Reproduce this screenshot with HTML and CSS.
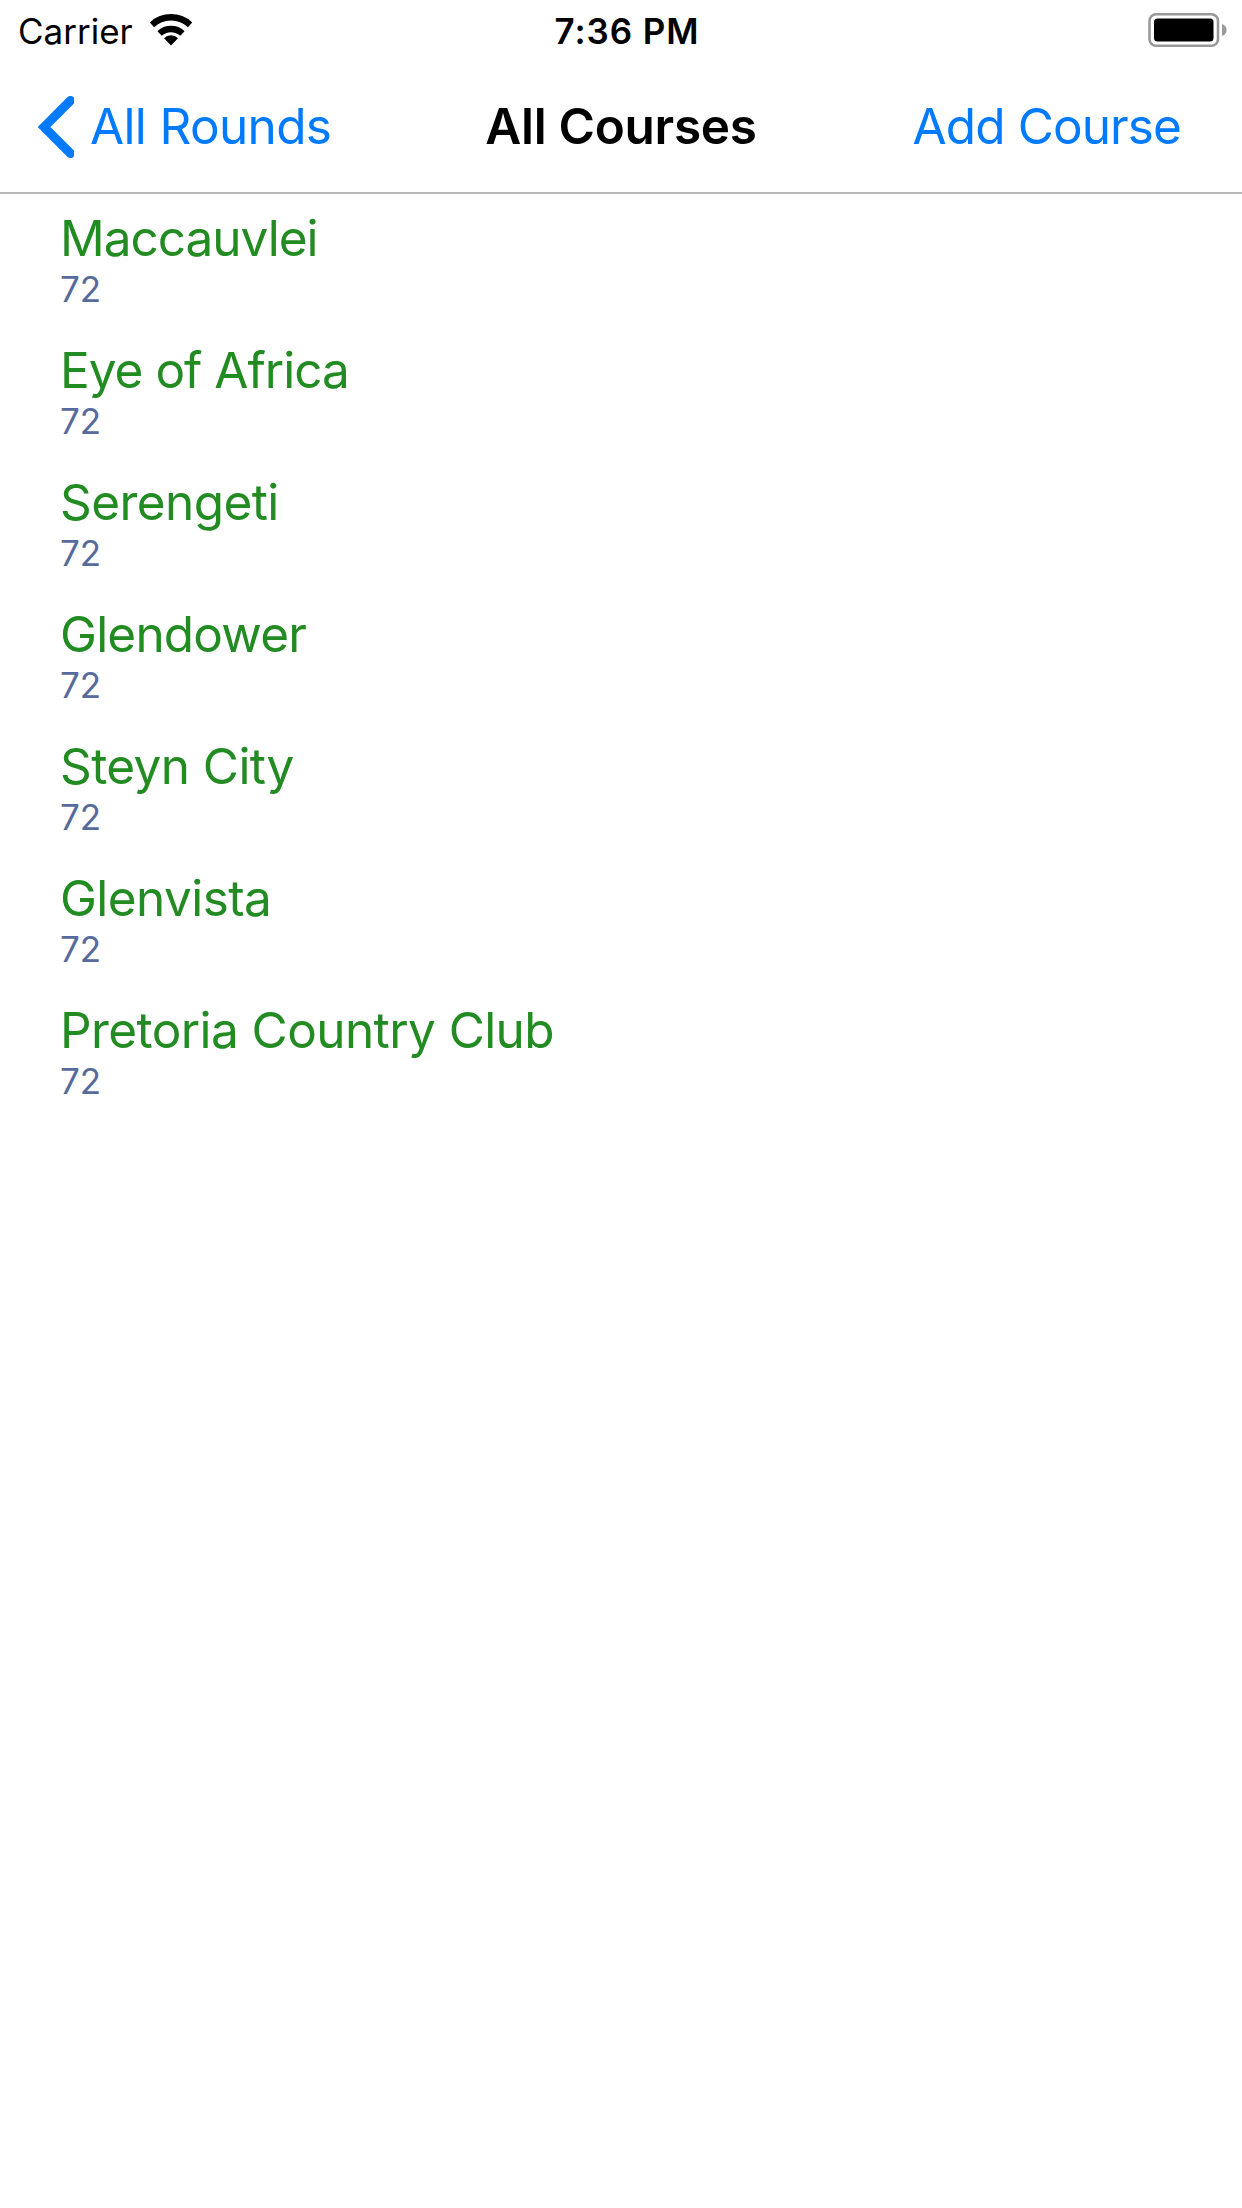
FILE: index.html
```html
<!DOCTYPE html>
<html lang="en">
<head>
<meta charset="utf-8">
<title>All Courses</title>
<link rel="stylesheet" href="styles.css">
</head>
<body>
<header class="status">
  <div class="carrier"><span class="carrier-name">Carrier</span>
    <svg class="wifi" width="42" height="32" viewBox="0 0 42 32"><path class="wave" d="M1.900 10.800A28 28 0 0 1 40.100 10.800M9.600 19.500A16.500 16.500 0 0 1 32.400 19.500"/><path d="M14 24.200A10 10 0 0 1 28 24.200L21 31.500Z"/></svg>
  </div>
  <time class="time">7:36 PM</time>
  <svg class="battery" width="80" height="36" viewBox="0 0 80 36"><rect class="shell" x="2.500" y="2.250" width="68.500" height="31.500" rx="6.500"/><rect x="7" y="6.500" width="59.500" height="23" rx="3.500"/><path class="tip" d="M75 12Q79.500 13.500 79.500 18T75 24Z"/></svg>
</header>
<nav class="nav">
  <a class="back"><svg class="chevron" width="36" height="62" viewBox="0 0 36 62"><path d="M32.500 4.500L6 31L32.500 57.500"/></svg><span class="back-label">All Rounds</span></a>
  <h1 class="title">All Courses</h1>
  <a class="add">Add Course</a>
</nav>
<main class="courses">
  <section class="course"><h2 class="tight">Maccauvlei</h2><p>72</p></section>
  <section class="course"><h2 class="tight">Eye of Africa</h2><p>72</p></section>
  <section class="course"><h2>Serengeti</h2><p>72</p></section>
  <section class="course"><h2 class="snug">Glendower</h2><p>72</p></section>
  <section class="course"><h2>Steyn City</h2><p>72</p></section>
  <section class="course"><h2>Glenvista</h2><p>72</p></section>
  <section class="course"><h2>Pretoria Country Club</h2><p>72</p></section>
</main>
</body>
</html>
```
FILE: styles.css
```css
* { box-sizing: border-box; margin: 0; padding: 0; }
body { min-height: 2208px; background: #fff; font-family: Inter, sans-serif; color: #000; }
.status { display: grid; grid-template-columns: 1fr auto 1fr; align-items: center; height: 60px; padding: 0 15px 0 18px; }
.carrier { display: flex; align-items: center; gap: 17px; font-size: 35px; }
.carrier-name { padding-top: 2px; }
.wave { fill: none; stroke: #000; stroke-width: 6.4; }
.time { padding: 2px 0 0 9px; font-size: 35px; font-weight: 560; letter-spacing: 0.9px; }
.battery { justify-self: end; }
.shell { fill: none; stroke: #999; stroke-width: 2.5; }
.tip { fill: #999; }
.nav { display: grid; grid-template-columns: 1fr auto 1fr; align-items: center; height: 134px; border-bottom: 2px solid #b8b8b8; padding: 0 38px; font-size: 49.5px; color: #007aff; }
.back { display: flex; align-items: center; gap: 16px; letter-spacing: -0.65px; }
.chevron { margin-top: 2px; }
.chevron path { fill: none; stroke: #007aff; stroke-width: 9; stroke-linecap: round; }
.title { font-size: 49.5px; font-weight: 600; letter-spacing: -0.3px; color: #000; }
.add { justify-self: end; margin-right: 23px; letter-spacing: -0.9px; }
.course { height: 132px; padding: 14px 60px 0; }
.course h2 { font-size: 49.5px; line-height: 60px; font-weight: 400; letter-spacing: -0.58px; color: #228b22; }
.course .tight { letter-spacing: -1px; }
.course .snug { letter-spacing: -0.8px; }
.course p { font-size: 35px; line-height: 42px; color: #566b9c; }
```
